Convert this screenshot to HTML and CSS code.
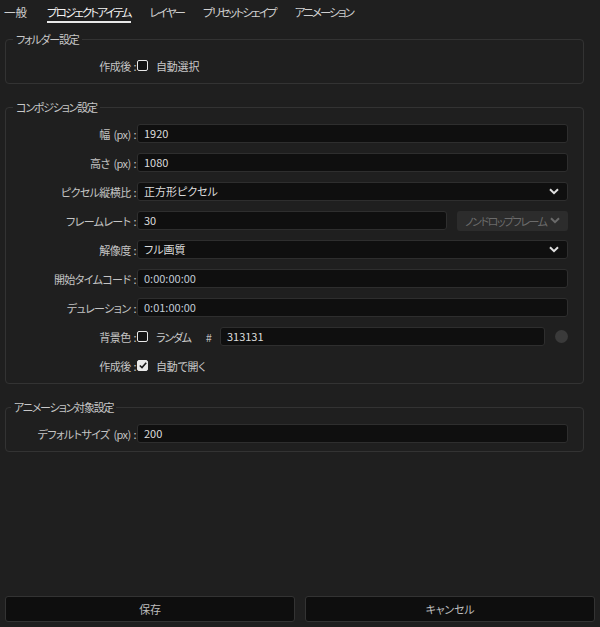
FILE: index.html
```html
<!DOCTYPE html>
<html lang="ja">
<head>
<meta charset="utf-8">
<link rel="stylesheet" href="styles.css">
</head>
<body>
<div class="app">
  <nav class="tabs">
    <span class="tab">一般</span>
    <span class="tab active">プロジェクトアイテム</span>
    <span class="tab">レイヤー</span>
    <span class="tab">プリセットシェイプ</span>
    <span class="tab">アニメーション</span>
  </nav>

  <main class="content">
    <fieldset class="group g1">
      <legend>フォルダー設定</legend>
      <div class="row">
        <label class="lbl">作成後<span class="colon">:</span></label>
        <div class="ctrl check-line">
          <span class="cb"></span><span class="cb-text">自動選択</span>
        </div>
      </div>
    </fieldset>

    <fieldset class="group g2">
      <legend>コンポジション設定</legend>
      <div class="rows">
        <div class="row">
          <label class="lbl">幅 (px)<span class="colon">:</span></label>
          <div class="ctrl"><div class="input">1920</div></div>
        </div>
        <div class="row">
          <label class="lbl">高さ (px)<span class="colon">:</span></label>
          <div class="ctrl"><div class="input">1080</div></div>
        </div>
        <div class="row">
          <label class="lbl">ピクセル縦横比<span class="colon">:</span></label>
          <div class="ctrl"><div class="input select"><span>正方形ピクセル</span>
            <svg class="chev" width="10" height="7" viewBox="0 0 10 7"><polyline points="1,1.2 5,5.2 9,1.2" fill="none" stroke="#e0e0e0" stroke-width="2"/></svg></div></div>
        </div>
        <div class="row">
          <label class="lbl">フレームレート<span class="colon">:</span></label>
          <div class="ctrl split">
            <div class="input grow">30</div>
            <div class="dropbtn"><span>ノンドロップフレーム</span>
              <svg class="chev" width="10" height="7" viewBox="0 0 10 7"><polyline points="1,1.2 5,5.2 9,1.2" fill="none" stroke="#6a6a6a" stroke-width="2"/></svg></div>
          </div>
        </div>
        <div class="row">
          <label class="lbl">解像度<span class="colon">:</span></label>
          <div class="ctrl"><div class="input select"><span>フル画質</span>
            <svg class="chev" width="10" height="7" viewBox="0 0 10 7"><polyline points="1,1.2 5,5.2 9,1.2" fill="none" stroke="#e0e0e0" stroke-width="2"/></svg></div></div>
        </div>
        <div class="row">
          <label class="lbl">開始タイムコード<span class="colon">:</span></label>
          <div class="ctrl"><div class="input tc">0:00:00:00</div></div>
        </div>
        <div class="row">
          <label class="lbl">デュレーション<span class="colon">:</span></label>
          <div class="ctrl"><div class="input tc">0:01:00:00</div></div>
        </div>
        <div class="row">
          <label class="lbl">背景色<span class="colon">:</span></label>
          <div class="ctrl check-line">
            <span class="cb"></span><span class="cb-text kana">ランダム</span>
            <span class="hash">#</span>
            <div class="input grow">313131</div>
            <span class="swatch"></span>
          </div>
        </div>
        <div class="row">
          <label class="lbl">作成後<span class="colon">:</span></label>
          <div class="ctrl check-line">
            <span class="cb checked"><svg width="8" height="7" viewBox="0 0 8 7"><polyline points="0.8,3.5 3,5.6 7.2,0.8" fill="none" stroke="#1a1a1a" stroke-width="1.6"/></svg></span><span class="cb-text">自動で開く</span>
          </div>
        </div>
      </div>
    </fieldset>

    <fieldset class="group g3">
      <legend>アニメーション対象設定</legend>
      <div class="row">
        <label class="lbl">デフォルトサイズ (px)<span class="colon">:</span></label>
        <div class="ctrl"><div class="input">200</div></div>
      </div>
    </fieldset>
  </main>

  <footer class="actions">
    <button class="btn">保存</button>
    <button class="btn">キャンセル</button>
  </footer>
</div>
</body>
</html>
```

FILE: styles.css
```css
* { box-sizing: border-box; }
html, body { margin: 0; padding: 0; }
body {
  background: #1f1f1f;
  color: #c4c4c4;
  font-family: "Noto Sans CJK JP", "Noto Sans", sans-serif;
  font-size: 11px;
  font-feature-settings: "palt";
}
.app {
  height: 627px;
  display: flex;
  flex-direction: column;
}
.tabs {
  height: 24px;
  display: flex;
  gap: 19px;
  padding-left: 4px;
  align-items: flex-start;
}
.tab {
  font-size: 11.5px;
  line-height: 16px;
  padding-top: 4px;
  color: #cfcfcf;
  letter-spacing: -1.9px;
  height: 23px;
  white-space: nowrap;
}
.tab:first-child { letter-spacing: 0; margin-right: 1px; }
.tab.active {
  color: #f2f2f2;
  border-bottom: 2px solid #e8e8e8;
}
.content {
  flex: 1;
  padding: 0 16px 0 5px;
}
.group {
  margin: 0;
  border: 1px solid #333333;
  border-radius: 4px;
  padding: 0 15px 0 0;
  min-width: 0;
}
.group legend {
  margin-left: 7px;
  padding: 0 3px;
  line-height: 16px;
  font-size: 11px;
  color: #c8c8c8;
  letter-spacing: -1.2px;
}
.g3 legend { margin-left: 5px; }
.g1 { margin-top: 7px; padding-top: 9px; padding-bottom: 8px; }
.g2 { margin-top: 15px; padding-top: 9px; padding-bottom: 8px; }
.g3 { margin-top: 15px; padding-top: 9px; padding-bottom: 8px; }
.rows {
  display: flex;
  flex-direction: column;
  gap: 10px;
}
.row {
  display: flex;
  align-items: center;
  height: 19px;
}
.lbl {
  width: 130px;
  text-align: right;
  color: #c4c4c4;
  white-space: pre;
  letter-spacing: -0.6px;
  word-spacing: 2px;
  flex: none;
}
.colon { margin-left: 3px; }
.ctrl {
  flex: 1;
  margin-left: 1px;
  display: flex;
  align-items: center;
  height: 19px;
  min-width: 0;
}
.input {
  flex: 1;
  height: 19px;
  background: #0f0f0f;
  border: 1px solid #2e2e2e;
  border-radius: 3px;
  padding: 0 6px;
  display: flex;
  align-items: center;
  color: #dcdcdc;
  line-height: 17px;
}
.input.tc { color: #c2ccd6; }
.select { justify-content: space-between; padding-right: 8px; }
.chev { display: block; flex: none; }
.split { gap: 10px; }
.grow { flex: 1; }
.dropbtn {
  width: 111px;
  height: 20px;
  background: #2c2c2c;
  border-radius: 3px;
  display: flex;
  align-items: center;
  justify-content: space-between;
  padding: 0 8px 0 8px;
  color: #6b6b6b;
  letter-spacing: -1.5px;
  white-space: nowrap;
  flex: none;
}
.check-line { gap: 0; }
.cb {
  width: 11px;
  height: 11px;
  border: 1.6px solid #e8e8e8;
  border-radius: 2px;
  background: #141414;
  flex: none;
  display: flex;
  align-items: center;
  justify-content: center;
}
.cb.checked { background: #e8e8e8; }
.cb-text { margin-left: 8px; color: #c8c8c8; letter-spacing: -0.2px; white-space: nowrap; }
.cb-text.kana { letter-spacing: -1.2px; }
.hash { margin-left: 15px; margin-right: 8px; color: #bdbdbd; }
.swatch {
  width: 13px;
  height: 13px;
  border-radius: 50%;
  background: #3a3a3a;
  margin-left: 10px;
  flex: none;
}
.actions {
  display: flex;
  gap: 10px;
  padding: 0 5px 5px 5px;
}
.btn {
  flex: 1;
  height: 26px;
  background: #0e0e0e;
  border: 1px solid #333333;
  border-radius: 3px;
  color: #bdbdbd;
  font-family: inherit;
  font-size: 11px;
  font-feature-settings: "palt";
  letter-spacing: -0.2px;
}
```
